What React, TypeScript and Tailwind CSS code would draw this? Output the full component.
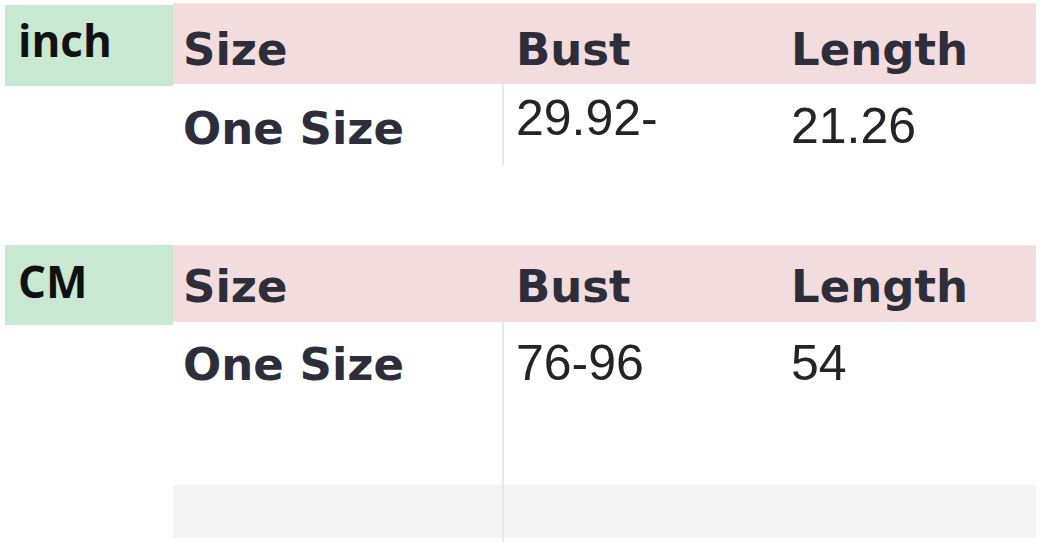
import React from "react";

const HEAD = "font-['DejaVu_Sans',sans-serif] font-bold text-[45px] leading-[45px] text-[#2e2e3a]";
const NUM = "font-['Liberation_Sans',Arial,sans-serif] text-[50px] leading-[50px] text-[#242428]";
const UNIT = "font-['Open_Sans',sans-serif] font-bold text-[44px] leading-[44px] text-[#111111]";

function Header({ unit, h, gh, pt, upt, gmt }: { unit: string; h: string; gh: string; pt: string; upt: string; gmt: string }) {
  return (
    <div className={`flex items-start ${h}`}>
      <div className={`w-[168px] shrink-0 bg-[#c9e8d1] pl-[13px] ${gh} ${gmt} ${upt}`}>
        <span className={UNIT}>{unit}</span>
      </div>
      <div className={`flex flex-1 self-stretch bg-[#f2dcdd] border-t border-[#f6e8e8] ${pt}`}>
        <div className={`w-[329px] shrink-0 pl-[10px] ${HEAD}`}>Size</div>
        <div className={`w-[278px] shrink-0 pl-[14px] ${HEAD}`}>Bust</div>
        <div className={`flex-1 pl-[11px] ${HEAD}`}>Length</div>
      </div>
    </div>
  );
}

export default function App() {
  return (
    <div className="w-[1040px] h-[542px] overflow-hidden bg-white pl-[5px] pr-[4px]">
      {/* inch table */}
      <div className="pt-[3px]">
        <Header unit="inch" h="h-[81px]" gh="h-[81px]" gmt="mt-[2px]" upt="pt-[13px]" pt="pt-[23px]" />
        <div className="flex h-[81px]">
          <div className="w-[168px] shrink-0" />
          <div className={`w-[329px] shrink-0 pl-[10px] pt-[22px] ${HEAD}`}>One Size</div>
          <div className={`w-[278px] shrink-0 border-l-2 border-[#e8e8e8] pl-[12px] pt-[9px] ${NUM}`}>29.92-</div>
          <div className={`flex-1 pl-[11px] pt-[17px] ${NUM}`}>21.26</div>
        </div>
      </div>

      {/* cm table */}
      <div className="mt-[80px]">
        <Header unit="CM" h="h-[77px]" gh="h-[80px]" gmt="mt-0" upt="pt-[14px]" pt="pt-[18px]" />
        <div className="flex h-[163px]">
          <div className="w-[168px] shrink-0" />
          <div className={`w-[329px] shrink-0 pl-[10px] pt-[20px] ${HEAD}`}>One Size</div>
          <div className={`w-[278px] shrink-0 border-l-2 border-[#e8e8e8] pl-[12px] pt-[16px] ${NUM}`}>76-96</div>
          <div className={`flex-1 pl-[11px] pt-[16px] ${NUM}`}>54</div>
        </div>
        <div className="flex h-[53px]">
          <div className="w-[168px] shrink-0" />
          <div className="w-[329px] shrink-0 bg-[#f4f4f4]" />
          <div className="w-[278px] shrink-0 border-l-2 border-[#e8e8e8] bg-[#f4f4f4]" />
          <div className="flex-1 bg-[#f4f4f4]" />
        </div>
        <div className="flex h-[10px]">
          <div className="w-[497px] shrink-0" />
          <div className="w-[278px] shrink-0 border-l-2 border-[#e8e8e8]" />
        </div>
      </div>
    </div>
  );
}
